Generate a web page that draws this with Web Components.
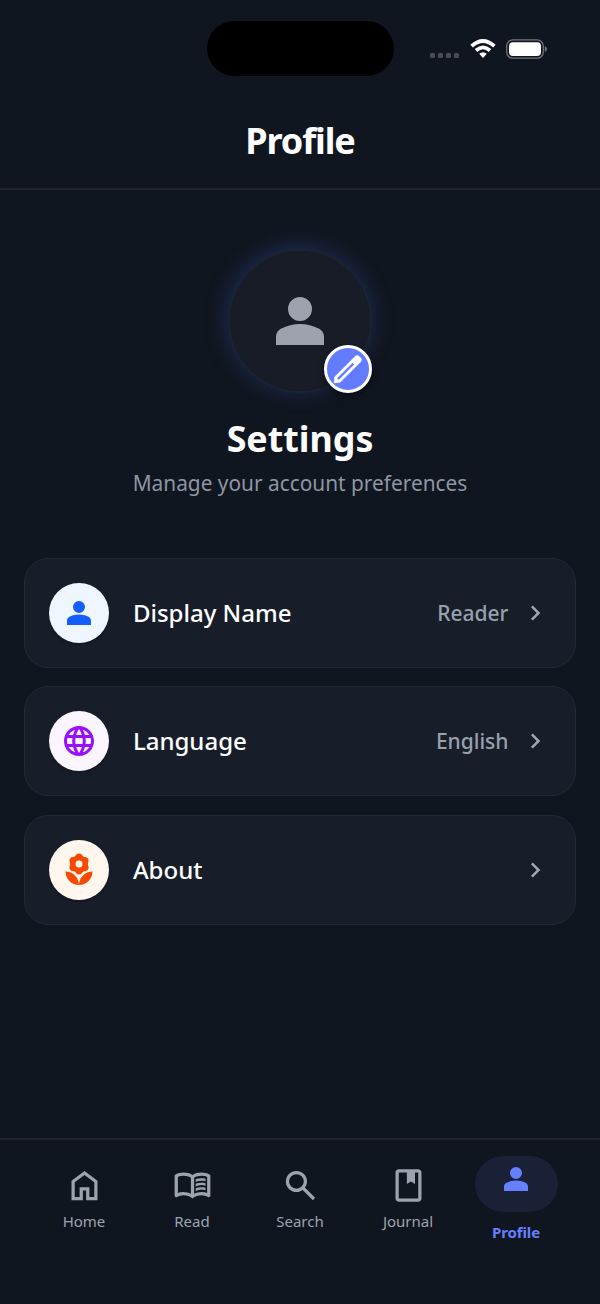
<!DOCTYPE html>
<html lang="en"><head><meta charset="utf-8"><title>Profile</title>
<style>html,body{margin:0;height:100%;background:#10161f}body{font-family:"Noto Sans",sans-serif;color:#fff}</style></head>
<body><profile-app></profile-app>
<script>
const ICONS={
person:'<path d="M12 12q-1.65 0-2.825-1.175T8 8t1.175-2.825T12 4t2.825 1.175T16 8t-1.175 2.825T12 12m-8 8v-2.8q0-.85.438-1.562T5.6 14.55q1.55-.775 3.15-1.162T12 13t3.25.388 3.15 1.162q.725.375 1.163 1.088T20 17.2V20z"/>',
globe:'<path d="M11.99 2C6.47 2 2 6.48 2 12s4.47 10 9.99 10C17.52 22 22 17.52 22 12S17.52 2 11.99 2zm6.93 6h-2.95c-.32-1.25-.78-2.45-1.38-3.56 1.84.63 3.37 1.91 4.33 3.56zM12 4.04c.83 1.2 1.48 2.53 1.91 3.96h-3.82c.43-1.43 1.08-2.76 1.91-3.96zM4.26 14C4.1 13.36 4 12.69 4 12s.1-1.36.26-2h3.38c-.08.66-.14 1.32-.14 2s.06 1.34.14 2H4.26zm.82 2h2.95c.32 1.25.78 2.45 1.38 3.56-1.84-.63-3.37-1.9-4.33-3.56zm2.95-8H5.08c.96-1.66 2.49-2.93 4.33-3.56C8.81 5.55 8.35 6.75 8.03 8zM12 19.96c-.83-1.2-1.48-2.53-1.91-3.96h3.82c-.43 1.43-1.08 2.76-1.91 3.96zM14.34 14H9.66c-.09-.66-.16-1.32-.16-2s.07-1.35.16-2h4.68c.09.65.16 1.32.16 2s-.07 1.34-.16 2zm.25 5.56c.6-1.11 1.06-2.31 1.38-3.56h2.95c-.96 1.65-2.49 2.93-4.33 3.56zM16.36 14c.08-.66.14-1.32.14-2s-.06-1.34-.14-2h3.38c.16.64.26 1.31.26 2s-.1 1.36-.26 2h-3.38z"/>',
flower:'<circle cx="12" cy="8" r="4.25" fill="none" stroke="currentColor" stroke-width="3.5"/><path d="M12 22c4.97 0 9-4.03 9-9-4.97 0-9 4.03-9 9zM5.6 10.25c0 1.38 1.12 2.5 2.5 2.5.53 0 1.01-.16 1.42-.44l-.02.19c0 1.38 1.12 2.5 2.5 2.5s2.5-1.12 2.5-2.5l-.02-.19c.4.28.89.44 1.42.44 1.38 0 2.5-1.12 2.5-2.5 0-1-.59-1.85-1.43-2.25.84-.4 1.43-1.25 1.43-2.25 0-1.38-1.12-2.5-2.5-2.5-.53 0-1.01.16-1.42.44l.02-.19C14.5 2.12 13.38 1 12 1S9.5 2.12 9.5 3.5l.02.19c-.4-.28-.89-.44-1.42-.44-1.38 0-2.5 1.12-2.5 2.5 0 1 .59 1.85 1.43 2.25-.84.4-1.43 1.25-1.43 2.25zM12 5.5c1.38 0 2.5 1.12 2.5 2.5s-1.12 2.5-2.5 2.5S9.5 9.38 9.5 8s1.12-2.5 2.5-2.5zM3 13c0 4.97 4.03 9 9 9 0-4.97-4.03-9-9-9z"/>',
edit:'<path transform="translate(12 12) rotate(-45) scale(1.03 .86) rotate(45) translate(-12 -12)" stroke="currentColor" stroke-width=".3" d="M5 19h1.425L16.2 9.225 14.775 7.8 5 17.575zm-2 2v-4.25L16.2 3.575q.3-.275.663-.425t.762-.15.775.15.65.45L20.425 5q.3.275.438.65T21 6.4q0 .4-.137.763t-.438.662L7.25 21z"/>',
chevron:'<path d="M12.6 12 8 7.4 9.4 6l6 6-6 6L8 16.6z"/>',
home:'<path d="M6 19h3v-6h6v6h3v-9l-6-4.5L6 10zm-2 2V9l8-6 8 6v12h-7v-6h-2v6z"/>',
book:'<path d="M6.5 16q1.175 0 2.288.263T11 17.05V7.2q-1.025-.6-2.175-.9T6.5 6q-.9 0-1.788.175T3 6.7v9.9q.875-.3 1.738-.45T6.5 16m6.500 1.050q1.100-.525 2.213-.787T17.500 16q.9 0 1.763.15T21 16.600V6.700q-.825-.35-1.713-.525T17.500 6q-1.175 0-2.325.3T13 7.200zM12 20q-1.200-.95-2.600-1.475T6.500 18q-1.050 0-2.062.275T2.500 19.050q-.525.275-1.012-.025T1 18.150V6.100q0-.275.138-.525T1.550 5.200q1.150-.6 2.400-.9T6.500 4q1.450 0 2.838.375T12 5.500q1.275-.75 2.663-1.125T17.500 4q1.300 0 2.550.3t2.400.9q.275.125.413.375T23 6.100v12.050q0 .575-.487.875t-1.013.025q-.925-.5-1.937-.775T17.500 18q-1.500 0-2.900.525T12 20"/><path id="l" d="M14 9.900V8.200q.825-.35 1.688-.525T17.500 7.500q.65 0 1.275.1T20 7.850v1.600q-.6-.225-1.213-.337T17.500 9q-.95 0-1.825.238T14 9.900"/><use href="#l" y="2.75"/><use href="#l" y="5.5"/>',
search:'<path d="m19.600 21-6.300-6.300q-.75.600-1.725.950T9.500 16q-2.725 0-4.612-1.888T3 9.500t1.888-4.612T9.500 3t4.613 1.888T16 9.500q0 1.100-.35 2.075T14.700 13.300l6.300 6.300zM9.500 14q1.875 0 3.188-1.312T14 9.500t-1.312-3.187T9.500 5 6.313 6.313 5 9.500t1.313 3.188T9.500 14"/>',
journal:'<path d="M6 22q-.825 0-1.412-.587T4 20V4q0-.825.588-1.412T6 2h12q.825 0 1.413.588T20 4v16q0 .825-.587 1.413T18 22zm0-2h12V4h-2v7l-2.500-1.500L11 11V4H6z"/>'};
const define=(name,css,html)=>customElements.define(name,class extends HTMLElement{
 connectedCallback(){if(this.shadowRoot)return;const t=document.createElement('template');t.innerHTML=`<style>*{box-sizing:border-box}${css}</style>`+html(this);this.attachShadow({mode:'open'}).append(t.content.cloneNode(true))}
});
define('ui-icon',':host{display:block;flex:none;width:var(--size,36px);height:var(--size,36px)}svg{display:block;width:100%;height:100%;fill:currentColor}',e=>`<svg viewBox="0 0 24 24">${ICONS[e.getAttribute('name')]}</svg>`);
define('status-bar',`:host{display:grid;grid-template-columns:1fr 187px 1fr;height:97px;padding-top:21px;align-items:start}
.island{grid-column:2;height:55px;border-radius:28px;background:#000}.status{display:flex;height:55px;align-items:center;padding-left:36px}
.dots{display:flex;gap:3px;margin-top:14px}.dots i{width:5px;height:5px;border-radius:1.5px;background:#4a4d55}.wifi{width:26px;height:20px;margin-left:11px}.battery{width:42px;height:20px;margin-left:10px}`,
()=>`<div class="island"></div><div class="status"><div class="dots"><i></i><i></i><i></i><i></i></div>
<svg class="wifi" viewBox="0 0 26 20" fill="none" stroke="#fff" stroke-width="3.700"><path d="M1.600 7.200Q13-3.200 24.400 7.200M6 11.500q7-6.300 14 0"/><path d="M9.200 14.800q3.800-3.200 7.600 0L13 19z" fill="#fff" stroke="none"/></svg>
<svg class="battery" viewBox="0 0 42 20"><rect x=".75" y=".9" width="36.500" height="18.300" rx="6" fill="none" stroke="#72757b" stroke-width="1.300"/><rect x="3" y="3.200" width="32" height="13.700" rx="4" fill="#fff"/><path d="M38.800 7q2.200.8 2.200 3t-2.200 3z" fill="#72757b"/></svg></div>`);
define('page-header',':host{display:flex;height:93px;padding-bottom:4px;align-items:center;justify-content:center;border-bottom:2px solid #20252f}h1{margin:0;font-size:36px;line-height:48px;letter-spacing:-1.100px;font-weight:700}',()=>'<h1><slot></slot></h1>');
define('profile-avatar',`:host{display:flex;position:relative;width:144px;height:144px;border-radius:50%;align-items:center;justify-content:center;background:#171c27;border:2px solid #1a2235;color:#9ca3af;box-shadow:-1px -2px 22px rgba(65,88,200,.34)}.main{--size:72px}
.edit{position:absolute;right:-2px;bottom:-2px;width:48px;height:48px;border:3px solid #fff;border-radius:50%;background:#627bff;color:#fff;display:flex;align-items:center;justify-content:center;box-shadow:0 3px 7px #0006}`,()=>'<ui-icon class="main" name="person"></ui-icon><div class="edit"><ui-icon name="edit"></ui-icon></div>');
define('profile-hero',':host{display:flex;flex-direction:column;align-items:center;padding-top:59px}h2{margin:20px 0 0;font-size:35.800px;line-height:50px;font-weight:700}p{margin:4px 0 0;font-size:20.850px;line-height:32px;color:#8e95a3}',()=>'<profile-avatar></profile-avatar><h2>Settings</h2><p>Manage your account preferences</p>');
define('setting-row',`:host{display:flex;height:110px;padding:0 24.500px 0 24.400px;align-items:center;border:1.500px solid #222934;border-radius:24px;background:#171e2a}.badge{width:60px;height:60px;border-radius:50%;display:grid;place-items:center;background:var(--bg);color:var(--fg);box-shadow:0 2px 3px #0003}.label{flex:1;margin-left:23.500px;font-size:24px;font-weight:480;padding-bottom:1px}.value{font-size:21px;color:#98a0ad;font-weight:460}.chevron{--size:30px;color:#a0a6b2;margin-left:12px}`,
e=>`<div class="badge"><ui-icon name="${e.getAttribute('icon')}"></ui-icon></div><span class="label"><slot></slot></span><span class="value">${e.getAttribute('value')||''}</span><ui-icon class="chevron" name="chevron"></ui-icon>`);
define('nav-item',`:host{display:flex;flex-direction:column;align-items:center;width:108px;padding-top:26px;color:#9ca3af;font-size:15px;line-height:20px;font-weight:430}.pill{display:flex;justify-content:center;height:39px}span{margin-top:6px}:host([active]){padding-top:16px;color:#6580ff;font-weight:700;letter-spacing:-.1px}:host([active]) .pill{width:83px;height:56px;border-radius:28px;background:#1a2036;padding-top:5px}:host([active]) span{margin-top:10px}`,e=>`<div class="pill"><ui-icon style="--size:${e.getAttribute('size')||39}px" name="${e.getAttribute('icon')}"></ui-icon></div><span><slot></slot></span>`);
define('bottom-nav',':host{display:flex;height:166px;border-top:2px solid #20252f;padding:0 30px;box-sizing:border-box}',()=>'<slot></slot>');
define('profile-app',`:host{display:flex;flex-direction:column;height:1304px;background:#10161f}main{flex:1}.settings{display:flex;flex-direction:column;gap:18.300px;padding:59px 24px 0}`,
()=>`<status-bar></status-bar><page-header>Profile</page-header><main><profile-hero></profile-hero><div class="settings">
<setting-row icon="person" value="Reader" style="--bg:#eff6ff;--fg:#155dfc">Display Name</setting-row><setting-row icon="globe" value="English" style="--bg:#faf5ff;--fg:#9810fa">Language</setting-row><setting-row icon="flower" style="--bg:#fff7ed;--fg:#f54a00">About</setting-row></div></main>
<bottom-nav><nav-item icon="home">Home</nav-item><nav-item icon="book">Read</nav-item><nav-item icon="search">Search</nav-item><nav-item icon="journal">Journal</nav-item><nav-item icon="person" size="36" active>Profile</nav-item></bottom-nav>`);
</script></body></html>
